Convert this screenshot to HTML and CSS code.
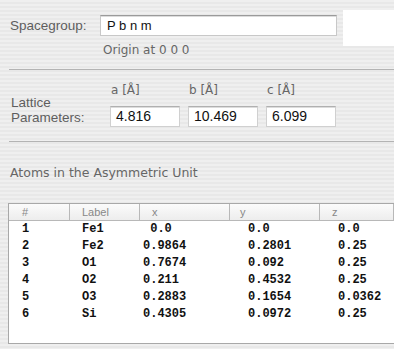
FILE: index.html
```html
<!DOCTYPE html>
<html lang="en">
<head>
  <meta charset="UTF-8">
  <meta name="viewport" content="width=device-width, initial-scale=1.0">
  <title>Structure Editor</title>
  <link rel="stylesheet" href="styles.css">
</head>
<body>
  <div class="window">
    <div class="spacegroup">
      <div class="sg-main">
        <div class="sg-row">
          <label class="label">Spacegroup:</label>
          <div class="field sg-field">P b n m</div>
        </div>
        <div class="origin">Origin at 0 0 0</div>
      </div>
      <div class="preview"></div>
    </div>

    <hr class="sep">

    <div class="lattice">
      <div class="label lattice-label">Lattice<br>Parameters:</div>
      <div class="axis">a [Å]</div>
      <div class="axis">b [Å]</div>
      <div class="axis">c [Å]</div>
      <div class="field num">4.816</div>
      <div class="field num">10.469</div>
      <div class="field num">6.099</div>
    </div>

    <hr class="sep">

    <div class="atoms">
      <div class="title">Atoms in the Asymmetric Unit</div>
      <div class="table">
        <div class="row head">
          <div>#</div><div>Label</div><div>x</div><div>y</div><div>z</div>
        </div>
        <div class="row"><div>1</div><div>Fe1</div><div> 0.0</div><div>0.0</div><div>0.0</div></div>
        <div class="row"><div>2</div><div>Fe2</div><div>0.9864</div><div>0.2801</div><div>0.25</div></div>
        <div class="row"><div>3</div><div>O1</div><div>0.7674</div><div>0.092</div><div>0.25</div></div>
        <div class="row"><div>4</div><div>O2</div><div>0.211</div><div>0.4532</div><div>0.25</div></div>
        <div class="row"><div>5</div><div>O3</div><div>0.2883</div><div>0.1654</div><div>0.0362</div></div>
        <div class="row"><div>6</div><div>Si</div><div>0.4305</div><div>0.0972</div><div>0.25</div></div>
      </div>
    </div>
  </div>
</body>
</html>
```

FILE: styles.css
```css
* {
  margin: 0;
  padding: 0;
  box-sizing: border-box;
}

body {
  overflow: hidden;
  background: repeating-linear-gradient(to bottom, #efefef 0, #efefef 2px, #e8e8e8 2px, #e8e8e8 4px);
  font-family: 'DejaVu Sans', sans-serif;
  color: #666;
}

.window {
  width: 100%;
}

/* spacegroup */
.spacegroup {
  display: flex;
  align-items: flex-start;
  padding-top: 10px;
}

.sg-main {
  padding-top: 5px;
}

.sg-row {
  display: flex;
}

.label {
  font-family: 'Liberation Sans', sans-serif;
  font-size: 13.5px;
  color: #5e5e5e;
}

.sg-row .label {
  width: 100px;
  padding-left: 10px;
  line-height: 21px;
}

.field {
  height: 21px;
  background: #fff;
  border: 1px solid #c8c8c8;
  border-top-color: #9a9a9a;
  box-shadow: inset 0 1px 0 #dcdcdc;
  font-family: 'Liberation Sans', sans-serif;
  color: #111;
  padding-left: 6px;
  line-height: 19px;
}

.sg-field {
  width: 237px;
  font-size: 13px;
}

.origin {
  margin-top: 7px;
  padding-left: 103px;
  font-size: 12px;
  line-height: 14px;
}

.preview {
  flex: 1;
  height: 36px;
  margin-left: 6px;
  background: #fff;
}

.sep {
  border: none;
  border-top: 1px solid #b3b3b3;
  margin-left: 9px;
}

.spacegroup + .sep {
  margin-top: 12px;
}

/* lattice */
.lattice {
  display: grid;
  grid-template-columns: 91px 70px 70px 70px;
  grid-template-rows: auto 21px;
  column-gap: 8px;
  row-gap: 9px;
  padding: 13px 0 0 11px;
  margin-bottom: 14px;
}

.lattice-label {
  grid-row: 1 / 3;
  align-self: end;
  line-height: 15px;
  margin-bottom: 2px;
}

.axis {
  font-size: 12px;
  line-height: 14px;
  padding-left: 1px;
}

.num {
  font-size: 14px;
  border-color: #d0d0d0;
  border-top-color: #b0b0b0;
  padding-left: 5px;
}

/* atoms */
.title {
  margin-top: 23px;
  padding-left: 10px;
  font-size: 12.5px;
  line-height: 16px;
}

.table {
  margin: 22px 0 0 8px;
  height: 141px;
  background: #fff;
  border: 1px solid #a8a8a8;
  border-right: none;
  overflow: hidden;
}

.row {
  display: grid;
  grid-template-columns: 61px 70px 90px 90px 1fr;
  height: 17px;
  font-family: 'Liberation Mono', monospace;
  font-weight: bold;
  font-size: 12px;
  line-height: 17px;
  color: #111;
  white-space: pre;
}

.row div:nth-child(1) { padding-left: 13px; }
.row div:nth-child(2) { padding-left: 12px; }
.row div:nth-child(3) { padding-left: 3px; }
.row div:nth-child(4) { padding-left: 18px; }
.row div:nth-child(5) { padding-left: 18px; }

.row.head {
  height: 17px;
  background: linear-gradient(#fbfbfb, #ededed);
  border-bottom: 1px solid #b8b8b8;
  font-family: 'Liberation Sans', sans-serif;
  font-weight: normal;
  font-size: 11px;
  line-height: 16px;
  color: #888;
}

.row.head div {
  padding-left: 12px;
  border-right: 1px solid #b8b8b8;
}

.row.head div:nth-child(1) { padding-left: 13px; }
.row.head div:nth-child(4) { padding-left: 10px; }
```
